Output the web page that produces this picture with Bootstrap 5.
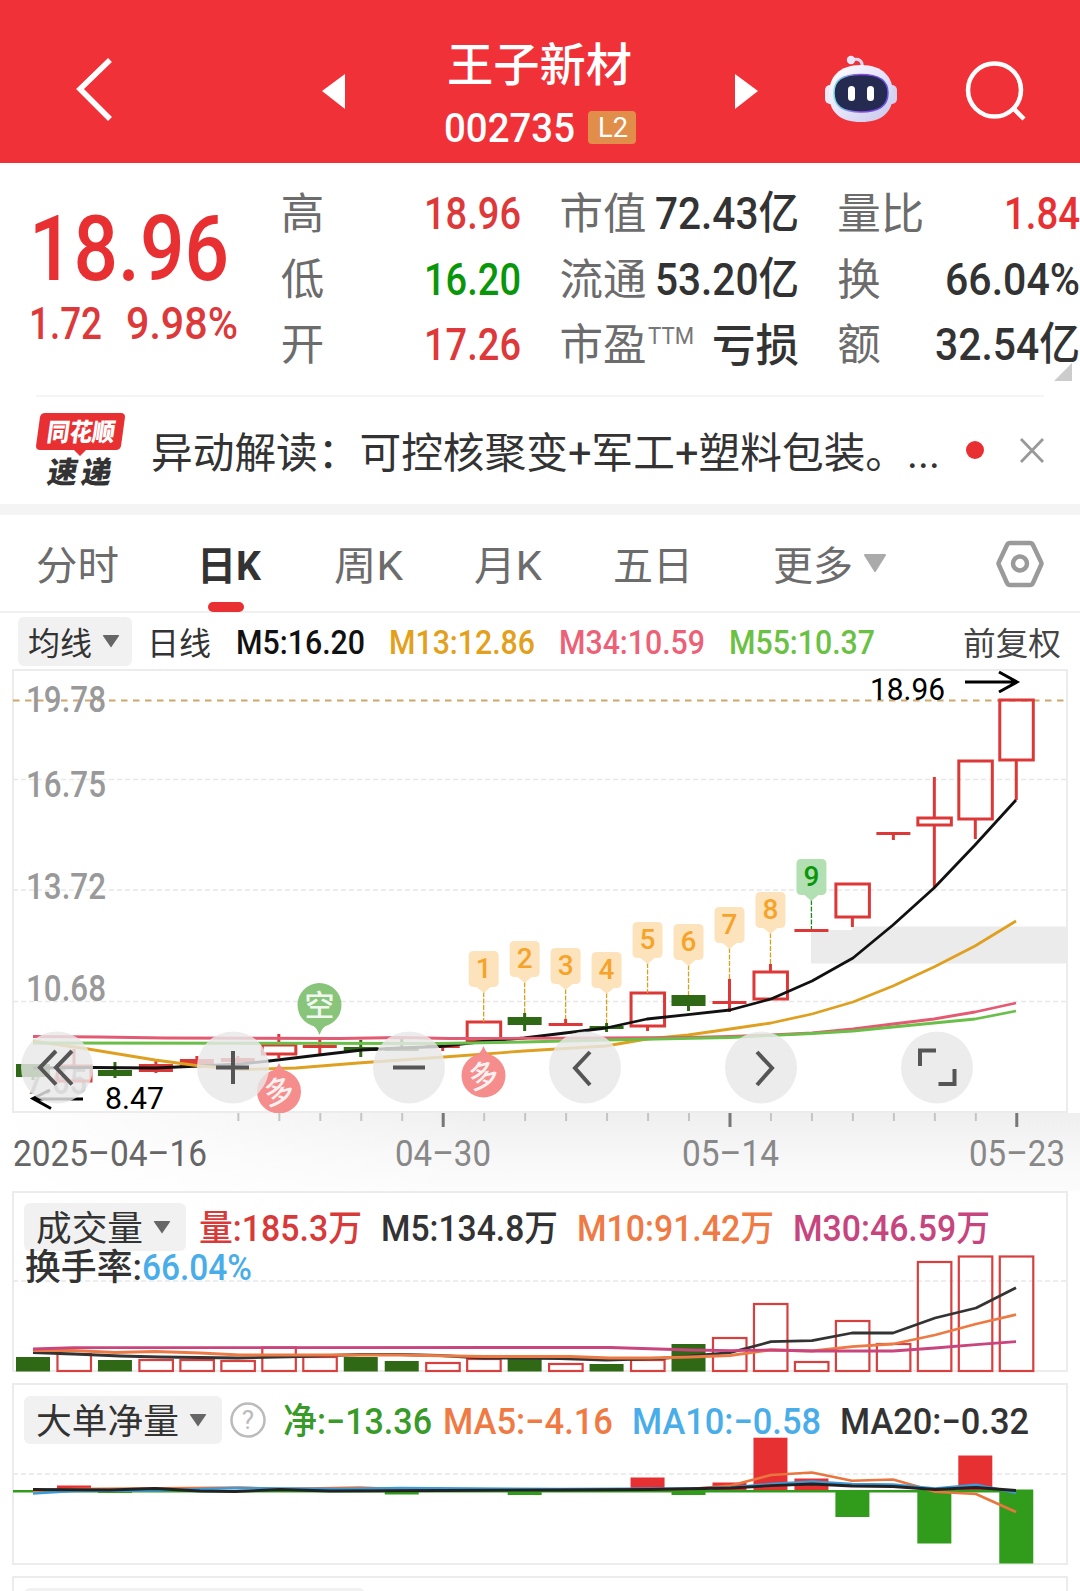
<!DOCTYPE html>
<html lang="zh-CN">
<head>
<meta charset="utf-8">
<meta name="viewport" content="width=device-width, initial-scale=1">
<title>王子新材 002735</title>
<link href="https://cdn.jsdelivr.net/npm/bootstrap@5.3.0/dist/css/bootstrap.min.css" rel="stylesheet">
<style>
body{font-family:Roboto,"Noto Sans CJK SC",sans-serif;color:#333;background:#fff;overflow:hidden;height:1591px}
svg{display:block;overflow:visible}
.fit{display:inline-block;white-space:nowrap;transform-origin:0 50%;flex:none}
.topbar{height:163px;background:#f13138;color:#fff}
.topbar .pad-back{margin-left:76px}
.topbar .pad-prev{margin-left:210px}
.titlebox{width:196px;margin-left:98px;padding-top:38px}
.stock-name{font-size:46px;line-height:54px;font-weight:500}
.stock-code{font-size:41px;line-height:40px;font-weight:500;margin-top:14px;padding-left:1px}
.stock-code>.fit{padding-top:2px}
.l2{width:48px;height:33px;background:#e28e4b;border-radius:4px;font-size:28px;line-height:33px;font-weight:400;margin-left:13px;padding-left:10px}
.quote{height:232px}
.pricebox{width:281px;padding-left:29px}
.price{font-size:91px;line-height:90px;font-weight:500;color:#e83033;margin-top:41px}
.delta{font-size:45px;line-height:50px;font-weight:500;color:#dd393a;margin-top:5px}
.qcol{padding-top:18px}
.qrow{height:65.5px;line-height:65px;font-size:45px;font-weight:500}
.qrow .lab{font-size:43.5px;font-weight:400;color:#6c6c6c;padding-top:1px}
.colb{width:241px}.colc{width:240px;margin-left:38px}.cold{width:243px;margin-left:38px}
.up{color:#dd393a}.down{color:#0a960a}
.ttm{font-size:24px;font-weight:400;color:#777;line-height:40px;padding:4px 0 0 2px}
.yi{padding-top:2px}
.corner{width:18px;height:18px;background:#ccc;clip-path:polygon(100% 0,100% 100%,0 100%);right:8px;top:200px}
.hair{height:2px;background:#f4f4f4;margin:0 36px}
.news{height:107px;padding-left:36px}
.news-text{font-size:41.8px;color:#333;margin-left:25px;line-height:60px;padding-top:6px}
.band{height:11px;background:#f4f4f4}
.tabbar{height:98px;border-bottom:2px solid #f0f0f0;padding-left:36px;font-size:40px;line-height:103px;color:#6c6c6c;font-weight:400}
.tabbar .on{color:#333;font-weight:700}
.tabbar .on::after{content:"";position:absolute;left:11px;bottom:-1px;width:36px;height:10px;border-radius:5px;background:#e83033}
.legend-row{height:56px;padding-left:18px;font-size:33.5px;font-weight:500}
.legend-row .fit,.sub .fit{padding-top:4px}
.pick{background:#f1f1f1;border-radius:6px;color:#333;font-weight:400}
.pick .fit{padding-top:6px}
.pick1{width:114px;height:49px;padding-left:10px;font-size:32px}
.pick2{height:48px;padding-left:12px;font-size:35.5px}
.tri{width:18px;height:13px;background:#666;clip-path:polygon(0 0,100% 0,50% 100%);border-radius:2px}
.panel{margin:0 12px;width:1056px;border:2px solid #ececec;position:relative}
.panel>svg{position:absolute;left:0;top:0}
.sub{font-size:36.5px;font-weight:500}
.sub .d-flex{position:relative}
.kbox{height:444px}
.axis{height:78px;position:relative;background:linear-gradient(90deg,#fff 0,rgba(255,255,255,0) 45%),linear-gradient(#efefef,#f8f8f8 60%,#fcfcfc)}
.axis svg{position:absolute;left:0;top:0}
.c5{color:#111}.c13{color:#e3a01c}.c34{color:#ec6177}.c55{color:#6bc144}
.co{color:#f07a43}.cp{color:#c7457e}.cb{color:#48ade8}.cg{color:#389a28}.cr{color:#d83a3a}.ck{color:#333}
</style>
<script src="https://cdn.jsdelivr.net/npm/bootstrap@5.3.0/dist/js/bootstrap.bundle.min.js"></script>
</head>
<body>
<header class="topbar d-flex align-items-start">
  <svg class="pad-back" width="36" height="163" fill="none" stroke="#fff" stroke-width="5.500"><path d="M34 60 4 89l30 30"/></svg>
  <svg class="pad-prev" width="23" height="163" fill="#fff"><path d="M0 91 23 74v35z"/></svg>
  <div class="titlebox">
    <div class="stock-name"><span class="fit" data-w="185" style="margin-left:4px">王子新材</span></div>
    <div class="stock-code d-flex align-items-center"><span class="fit" data-w="131">002735</span><span class="l2"><span class="fit" data-w="30">L2</span></span></div>
  </div>
  <svg style="margin-left:96px" width="23" height="163" fill="#fff"><path d="M23 91 0 74v35z"/></svg>
  <svg style="margin-left:67px" width="72" height="163">
    <defs><linearGradient id="hd" x1="0" y1="0" x2="1" y2="1"><stop offset="0" stop-color="#fff"/><stop offset=".5" stop-color="#e6e4fa"/><stop offset="1" stop-color="#c5c6ea"/></linearGradient>
    <linearGradient id="rim" x1="0" y1="0" x2="1" y2="0"><stop offset="0" stop-color="#78e0ea"/><stop offset=".5" stop-color="#8a4ae0"/><stop offset="1" stop-color="#6a55e8"/></linearGradient></defs>
    <path d="M27 60c7-2 11 1 10 7" fill="none" stroke="#dcd9f3" stroke-width="3"/><circle cx="26" cy="60" r="4.2" fill="#ebe6fa"/>
    <rect x="0" y="85" width="12" height="19" rx="5" fill="#eceafa"/><rect x="60" y="85" width="12" height="19" rx="5" fill="#d5d2f0"/>
    <path d="M36 65c22 0 32 12 32 29 0 18-11 28-32 28S4 112 4 94c0-17 10-29 32-29z" fill="url(#hd)"/>
    <path d="M36 74.500c19 0 27 6 27 18.500s-8 19-27 19-27-6-27-19 8-18.500 27-18.500z" fill="#242a50" stroke="url(#rim)" stroke-width="1.500"/>
    <rect x="23" y="86" width="7" height="15" rx="3.500" fill="#fff"/><rect x="42" y="86" width="7" height="15" rx="3.500" fill="#fff"/>
  </svg>
  <svg style="margin-left:68px" width="62" height="163" fill="none" stroke="#fff" stroke-width="4.500"><circle cx="29.500" cy="90" r="26.500"/><path d="m48 108 11 11" stroke-width="4.500"/></svg>
</header>

<section class="quote d-flex position-relative">
  <div class="pricebox">
    <div class="price"><span class="fit" data-w="200">18.96</span></div>
    <div class="delta d-flex"><span class="fit" data-w="73">1.72</span><span class="fit" data-w="112" style="margin-left:24px">9.98%</span></div>
  </div>
  <div class="qcol colb">
    <div class="qrow d-flex justify-content-between"><span class="lab">高</span><span class="fit up" data-w="97">18.96</span></div>
    <div class="qrow d-flex justify-content-between"><span class="lab">低</span><span class="fit down" data-w="97">16.20</span></div>
    <div class="qrow d-flex justify-content-between"><span class="lab">开</span><span class="fit up" data-w="97">17.26</span></div>
  </div>
  <div class="qcol colc">
    <div class="qrow d-flex justify-content-between"><span class="lab">市值</span><span class="fit" data-w="144">72.43亿</span></div>
    <div class="qrow d-flex justify-content-between"><span class="lab">流通</span><span class="fit" data-w="144">53.20亿</span></div>
    <div class="qrow d-flex"><span class="lab">市盈</span><span class="ttm"><span class="fit" data-w="46">TTM</span></span><span class="fit ms-auto yi" data-w="87">亏损</span></div>
  </div>
  <div class="qcol cold">
    <div class="qrow d-flex justify-content-between"><span class="lab">量比</span><span class="fit" data-w="76" style="color:#e83033">1.84</span></div>
    <div class="qrow d-flex justify-content-between"><span class="lab">换</span><span class="fit" data-w="135">66.04%</span></div>
    <div class="qrow d-flex justify-content-between"><span class="lab">额</span><span class="fit" data-w="145">32.54亿</span></div>
  </div>
  <div class="corner position-absolute"></div>
</section>
<div class="hair"></div>
<section class="news d-flex align-items-center">
  <svg width="90" height="107" font-family="'Noto Sans CJK SC',sans-serif" font-weight="900">
    <path d="M9 16h76q4 0 4 4l-4 29q-1 4-5 4H50l-6 6-6-6H4q-4 0-4-4l4-29q1-4 5-4z" fill="#e83033"/>
    <text transform="translate(10 44) skewX(-8)" font-size="25" fill="#fff" textLength="68" lengthAdjust="spacingAndGlyphs">同花顺</text>
    <text transform="translate(10 85.500) skewX(-10)" font-size="30" fill="#333" textLength="64">速递</text>
  </svg>
  <span class="news-text"><span class="fit" data-w="789">异动解读：可控核聚变+军工+塑料包装。...</span></span>
  <svg style="margin-left:25px" width="20" height="20"><circle cx="10" cy="9" r="9" fill="#e83033"/></svg>
  <svg style="margin-left:35px" width="24" height="24" stroke="#999" stroke-width="2.800"><path d="m1 0 22 23m0-23L1 23"/></svg>
</section>
<div class="band"></div>
<nav class="tabbar d-flex">
  <span class="fit" data-w="83">分时</span>
  <span class="position-relative on" style="margin-left:78px"><span class="fit" data-w="64">日K</span></span>
  <span class="fit" data-w="69" style="margin-left:73px">周K</span>
  <span class="fit" data-w="68" style="margin-left:71px">月K</span>
  <span class="fit" data-w="80" style="margin-left:71px">五日</span>
  <span class="fit" data-w="80" style="margin-left:80px">更多</span>
  <svg style="margin-left:11px" width="22" height="60"><path d="M1 40h20L11 56z" fill="#aaa" stroke="#aaa" stroke-width="2" stroke-linejoin="round"/></svg>
  <svg style="margin-left:110px" width="48" height="90" fill="none" stroke="#9a9a9a"><path d="M14 28h20q2 0 3 2l8 17q1 1.500 0 3l-8 18q-1 2-3 2H14q-2 0-3-2L3 50q-1-1.500 0-3l8-17q1-2 3-2z" stroke-width="4.500"/><circle cx="24" cy="48.500" r="7" stroke-width="4.500"/></svg>
</nav>
<section class="legend-row d-flex align-items-center">
  <div class="pick pick1 d-flex align-items-center"><span class="fit" data-w="64">均线</span><i class="tri" style="margin-left:10px"></i></div>
  <span class="fit" data-w="64" style="margin-left:15px;padding-top:5px;font-weight:400;font-size:32px">日线</span>
  <span class="fit c5" data-w="129" style="margin-left:25px">M5:16.20</span>
  <span class="fit c13" data-w="146" style="margin-left:24px">M13:12.86</span>
  <span class="fit c34" data-w="146" style="margin-left:24px">M34:10.59</span>
  <span class="fit c55" data-w="146" style="margin-left:24px">M55:10.37</span>
  <span class="fit" data-w="98" style="margin-left:88px;padding-top:5px;font-weight:400;font-size:32px;color:#444">前复权</span>
</section>
<section class="panel kbox"><svg id="kline" width="1052" height="440" viewBox="14 671 1052 440"></svg></section>
<section class="axis"><svg id="axis" width="1080" height="78" viewBox="0 1113 1080 78"></svg></section>
<section class="panel sub" style="height:181px">
  <svg id="vol" width="1052" height="177" viewBox="14 1193 1052 177"></svg>
  <div class="d-flex align-items-center" style="height:48px;margin-top:10px;padding-left:10px">
    <div class="pick pick2 d-flex align-items-center" style="width:162px"><span class="fit" data-w="107">成交量</span><i class="tri" style="margin-left:10px"></i></div>
    <span class="fit cr" data-w="163" style="margin-left:13px">量:185.3万</span>
    <span class="fit ck" data-w="177" style="margin-left:19px">M5:134.8万</span>
    <span class="fit co" data-w="197" style="margin-left:19px">M10:91.42万</span>
    <span class="fit cp" data-w="197" style="margin-left:19px">M30:46.59万</span>
  </div>
  <div class="d-flex align-items-center" style="height:32px;margin-top:-1px;padding-left:11px"><span class="fit ck" data-w="117" style="padding-top:5px">换手率:</span><span class="fit cb" data-w="110">66.04%</span></div>
</section>
<section class="panel sub" style="height:182px;margin-top:11px">
  <svg id="net" width="1052" height="178" viewBox="14 1385 1052 178"></svg>
  <div class="d-flex align-items-center" style="height:48px;margin-top:11px;padding-left:10px">
    <div class="pick pick2 d-flex align-items-center" style="width:198px"><span class="fit" data-w="143">大单净量</span><i class="tri" style="margin-left:10px"></i></div>
    <svg style="margin-left:8px" width="36" height="36"><circle cx="18" cy="18" r="16.500" fill="none" stroke="#bbb" stroke-width="2.500"/><text x="18" y="27" text-anchor="middle" font-size="26" font-weight="400" fill="#bbb">?</text></svg>
    <span class="fit cg" data-w="149" style="margin-left:17px">净:−13.36</span>
    <span class="fit co" data-w="170" style="margin-left:11px">MA5:−4.16</span>
    <span class="fit cb" data-w="189" style="margin-left:19px">MA10:−0.58</span>
    <span class="fit ck" data-w="189" style="margin-left:19px">MA20:−0.32</span>
  </div>
</section>
<section class="panel" style="height:40px;margin-top:11px"><div class="pick" style="width:341px;height:30px;margin:10px 0 0 10px"></div></section>

<script>
// Condense each text run to its target advance width
document.querySelectorAll('.fit').forEach(e=>{const w=e.getBoundingClientRect().width,d=+e.dataset.w;e.style.transform='scaleX('+d/w+')';e.style.marginRight=(d-w)+'px'});
const X=i=>33+40.97*i,R='#dc3838',G='#2f6915';
const line=(x1,y1,x2,y2,c,w,extra='')=>`<line x1="${x1}" y1="${y1}" x2="${x2}" y2="${y2}" stroke="${c}" stroke-width="${w}" ${extra}/>`;
const poly=(p,c,w=2.8)=>`<polyline points="${p}" fill="none" stroke="${c}" stroke-width="${w}" stroke-linejoin="round"/>`;
const txt=(s,x,y,w,fs,c,fw=500)=>`<text x="${x}" y="${y}" font-size="${fs}" font-weight="${fw}" fill="${c}" textLength="${w}" lengthAdjust="spacingAndGlyphs">${s}</text>`;
const grid=y=>line(13,y,1066,y,'#e8e8e8',1.5,'stroke-dasharray="5 3"');
// kind (r solid red, h hollow red, g green), body top, body bottom, high, low
const K=[['g',1064,1077,1064,1080],['h',1066,1081,1049,1066],['g',1070,1076,1062,1078],['r',1064,1072,1060,1073],['r',1059,1066,1056,1066],['r',1058,1062,1056,1064],['h',1045,1054,1034,1058],['r',1045,1048,1038,1054],['g',1047,1051,1040,1057],['g',1047,1051,1039,1051],['r',1045,1048,1045,1051],['h',1022,1041,1022,1041],['g',1017,1025,1013,1031],['r',1023,1026,1019,1026],['g',1026,1029,1023,1032],['h',993,1026,993,1031],['g',995,1006,995,1011],['r',1001,1004,979,1012],['h',972,999,964,999],['r',929,932,929,932],['h',884,917,884,927],['r',832,835,832,840],['h',818,825,777,888],['h',761,819,761,839],['h',700,760,700,800]];
let s=`<path d="M811 930h41v-3.500h215v37H811z" fill="#ebebeb"/>`+[779.5,890,1001.5].map(grid).join('')+line(13,700.5,1066,700.5,'#cda76c',1.8,'stroke-dasharray="6.500 5.500"');
s+=[['19.78',712],['16.75',797],['13.72',899],['10.68',1001],['7.65',1094]].map(a=>txt(a[0],26,a[1],a[0].length>4?80:61,36,'#999')).join('');
K.forEach(([k,t,b,h,l],i)=>{const x=X(i),c=k=='g'?G:R;
 if(h<t)s+=line(x,h,x,t,c,3);if(l>b)s+=line(x,b,x,l,c,3);
 s+=k=='h'?`<rect x="${x-16.5}" y="${t}" width="33.500" height="${b-t}" fill="none" stroke="${R}" stroke-width="3"/>`:`<rect x="${x-17}" y="${t}" width="34" height="${b-t}" fill="${c}"/>`});
s+=poly('33,1068 93,1067.500 155,1068 200,1066 240,1064 269,1061 319,1055 362,1050 400,1048 440,1046.500 483,1041.500 524,1038 565,1033 606,1028 647,1019 688,1014.700 730,1010 771,999 812,981 853,958 893,925 934,888 975,845 1016,800','#111');
s+=poly('33,1041 88,1049 155,1060 200,1066 240,1069.500 296,1068 358,1063 444,1057 524,1051 606,1046 647,1039 688,1035 730,1029 771,1023 812,1014 853,1002 893,986 934,967 975,946 1016,921','#dfa020');
s+=poly('33,1036.500 100,1037 165,1038 340,1038.500 400,1037.500 450,1038.500 606,1038 688,1037.500 730,1036.500 771,1035 812,1033 853,1029 893,1024 934,1019 975,1012 1016,1003','#e45a72');
s+=poly('33,1043 440,1043.500 524,1042 606,1040 730,1037.500 812,1033.500 853,1031 893,1027 934,1023 975,1019 1016,1011','#6abf48');
[951,941,948,952,922,924,907,892,859].forEach((t,i)=>{const x=X(11+i),g=i==8,e=[1022,1013,1019,1023,993,995,979,964,929][i];
 s+=line(x,t+41,x,e,g?'#1a8a1a':'#d9a21e',1.3,'stroke-dasharray="5 1.500"');
 s+=`<path d="M${x-10} ${t}h20q5 0 5 5v26q0 5-5 5h-3l-7 6-7-6h-3q-5 0-5-5v-26q0-5 5-5z" fill="${g?'#b3e0b3':'#fde3bb'}"/><text x="${x}" y="${t+27}" text-anchor="middle" font-size="28" font-weight="500" fill="${g?'#0a960a':'#f5a32a'}">${i+1}</text>`});
const pin=(x,y,tip,c,t,r)=>{const d=tip>y?1:-1;return `<g fill="${c}"><circle cx="${x}" cy="${y}" r="22"/><path d="M${x-11} ${y+18*d}Q${x-3} ${y+21*d} ${x} ${tip}Q${x+3} ${y+21*d} ${x+11} ${y+18*d}z"/></g><text transform="translate(${x} ${y}) rotate(${r})" y="11" text-anchor="middle" font-size="30" font-weight="500" fill="#fff" fill-opacity=".9">${t}</text>`};
s+=pin(319.5,1005,1035,'#89c47b','空',0)+pin(279,1091.500,1063,'#f58d8d','多',-14)+pin(483.5,1075.500,1046,'#f58d8d','多',-14);
s+=`<g fill="none" stroke="#000" stroke-width="3"><path d="M965 682h51M999 672l18 10-18 10M83 1099H33M50 1090l-17 8.500 18 10"/></g>`+txt('18.96',870,700,75,31,'#000',400)+txt('8.47',105,1108.500,59,31,'#000',400);
[57,233,409,585,761,937].forEach(x=>s+=`<circle cx="${x}" cy="1067.500" r="36" fill="#e8e8e8" fill-opacity=".82"/>`);
s+=`<g fill="none" stroke="#555" stroke-width="4"><path d="M56 1051l-16 16.500 16 17M72 1051l-16 16.500 16 17M216 1067.500h33M233 1051v33M393 1067.500h32M590 1052l-15 16 15 17M757 1052l15 16-15 17M920 1066v-15.500h16M954.500 1069v15h-16"/></g>`;
kline.innerHTML=s;
s='';for(let i=5;i<25;i++)s+=i%7==3?line(X(i)+.5,1113,X(i)+.5,1127,'#777',3):line(X(i)+.5,1113,X(i)+.5,1121,'#c4c4c4',2);
s+=txt('2025–04–16',13,1165.500,194,36.500,'#666',400)+txt('04–30',395,1165.500,96,36.500,'#888',400)+txt('05–14',682,1165.500,97,36.500,'#888',400)+txt('05–23',969,1165.500,96,36.500,'#888',400);
axis.innerHTML=s;
// volume bars: leading g marks a falling day
s=grid(1281);
'g1357 1354 g1360 1360 1360 1361 1347.5 1357 g1357 g1361 1363 1359 g1359 1364 g1364 1360 g1344 1338 1304 1362 1321 1344 1262 1256.5 1256.5'.split(' ').forEach((v,i)=>{const g=v[0]=='g',t=+v.replace('g',''),x=X(i);
 s+=g?`<rect x="${x-17}" y="${t}" width="34" height="${1371.5-t}" fill="${G}"/>`:`<rect x="${x-16.5}" y="${t}" width="33.500" height="${1371-t}" fill="none" stroke="#d84040" stroke-width="2.200"/>`});
s+=poly('33,1352.500 74,1354 120,1356 160,1357 238,1358 300,1356.500 360,1354.500 400,1354.500 440,1355.500 483,1358 560,1358.500 606,1360 660,1358.500 690,1356 730,1352.700 771,1341.700 812,1340.700 852,1333 893,1333 935,1318 976,1308 1016,1287.700','#333');
s+=poly('33,1350.500 74,1350.500 115,1352.500 155,1351.500 200,1353 240,1355 400,1355 483,1356.500 570,1356.500 610,1358 650,1358 690,1357 730,1355.500 771,1350 812,1351 852,1346.700 893,1344 935,1335 976,1324 1016,1314.700','#ec7a45');
s+=poly('33,1349 74,1347.700 540,1347.500 610,1347.500 690,1350 730,1350.700 771,1350 812,1351 893,1351 935,1348 976,1344.700 1016,1341.700','#c8457d');
vol.innerHTML=s;
s=grid(1474);
[[1,1485.5,1490],[2,1490,1493],[9,1490,1494.5],[12,1490,1495],[15,1477.500,1490],[16,1490,1495],[17,1482.500,1490],[18,1437.700,1490],[19,1478.500,1490],[20,1490,1517],[22,1490,1543.500],[23,1455.500,1490],[24,1489.500,1563.500]].forEach(([i,a,b])=>s+=`<rect x="${X(i)-17}" y="${a}" width="34" height="${b-a}" fill="${a<1489?'#e73032':'#319b1c'}"/>`);
s+=line(13,1491.2,1033,1491.2,'#319b1c',2.4);
s+=poly('33,1491 74,1489 190,1488 240,1487.500 280,1489 360,1487.500 420,1490 640,1489.500 690,1489 731,1485.500 771,1475 812,1472.500 852,1480.700 893,1479.500 916,1486 935,1491.700 976,1494 1016,1512','#e9763e',2.6);
s+=poly('33,1493.500 74,1491 155,1490.500 235,1488 340,1489 400,1488 560,1489 690,1488.500 731,1487.500 771,1484 812,1481.500 852,1484 893,1484.500 935,1488.500 976,1484.700 1016,1492.700','#3d9bd8',2.6);
s+=poly('33,1489.500 110,1490 155,1488.500 200,1491 235,1491.500 280,1489.500 330,1491 440,1490.500 560,1490 650,1489.500 731,1488 771,1485.700 812,1484 852,1486 893,1486.500 935,1489.500 976,1487.500 1016,1490.500','#222');
net.innerHTML=s;
</script>
</body>
</html>
